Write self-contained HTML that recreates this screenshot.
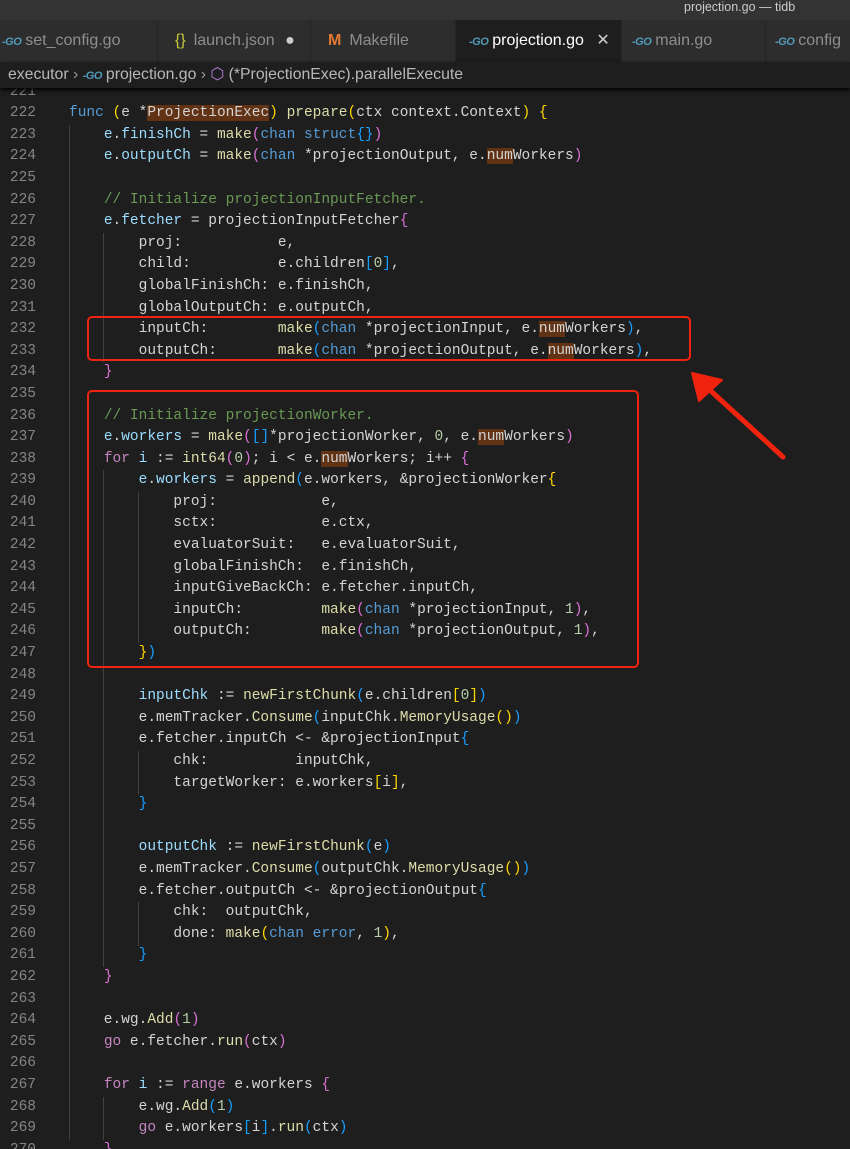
<!DOCTYPE html>
<html><head><meta charset="utf-8"><style>
*{margin:0;padding:0;box-sizing:border-box}
body{width:850px;height:1149px;background:#1e1e1e;overflow:hidden;position:relative;font-family:"Liberation Sans",sans-serif}
#title{position:absolute;left:0;top:0;width:850px;height:20px;background:#333;color:#ccc;font-size:12.5px;line-height:14px}
#title span{position:absolute;left:684px;top:0}
#tabs{position:absolute;left:0;top:20px;width:850px;height:42px;background:#252526}
.tab{position:absolute;top:0;height:42px;background:#2d2d2d;border-right:1px solid #252526;color:#8e8e8e;font-size:16px;line-height:42px;white-space:nowrap;overflow:hidden}
.tab.act{background:#1e1e1e;color:#fff}
.go{color:#519aba;font-weight:bold;font-style:italic;font-size:11px;margin-right:4px;letter-spacing:-.5px}
#bc{position:absolute;left:0;top:62px;width:850px;height:26px;background:#1e1e1e;color:#b8b8b8;font-size:15.8px;line-height:26px;padding-left:8px;white-space:nowrap;box-shadow:0 2px 4px #000;z-index:3}
#ed{position:absolute;left:0;top:88px;width:850px;height:1061px;overflow:hidden}
#in{position:absolute;left:0;top:-6.4px;width:850px}
.l{height:21.6px;line-height:21.6px;font-family:"Liberation Mono",monospace;font-size:14.5px;white-space:pre;color:#d4d4d4;position:relative}
.n{position:absolute;left:0;width:36px;text-align:right;color:#858585}
.c{position:absolute;left:69px}
.k{color:#569cd6}.p{color:#c586c0}.f{color:#dcdcaa}.v{color:#9cdcfe}.m{color:#6a9955}.u{color:#b5cea8}
.y{color:#ffd700}.q{color:#da70d6}.b{color:#179fff}
.h{background:#613214}
.g{position:absolute;width:1px;background:#404040}
.box{position:absolute;border:2.5px solid #f0230f;border-radius:5px;z-index:4}
</style></head><body>
<div id="title"><span>projection.go — tidb</span></div>
<div id="tabs">
<div class="tab" style="left:0;width:158px;padding-left:2px"><span class="go">-GO</span>set_config.go</div>
<div class="tab" style="left:158px;width:153px;padding-left:17px"><span style="color:#cbcb41;margin-right:8px">{}</span>launch.json <span style="color:#ccc;margin-left:6px">●</span></div>
<div class="tab" style="left:311px;width:145px;padding-left:17px"><span style="color:#e37933;font-weight:bold;margin-right:8px">M</span>Makefile</div>
<div class="tab act" style="left:456px;width:166px;padding-left:13px"><span class="go">-GO</span>projection.go <span style="color:#ccc;margin-left:8px">✕</span></div>
<div class="tab" style="left:622px;width:144px;padding-left:10px"><span class="go">-GO</span>main.go</div>
<div class="tab" style="left:766px;width:90px;padding-left:9px"><span class="go">-GO</span>config</div>
</div>
<div id="bc">executor <span style="color:#999">›</span> <span class="go">-GO</span>projection.go <span style="color:#999">›</span> <span style="color:#b180d7">⬡</span> (*ProjectionExec).parallelExecute</div>
<div id="ed"><div id="in">
<div class="g" style="left:69px;top:43.2px;height:1015px"></div>
<div class="g" style="left:103px;top:151.2px;height:129.6px"></div>
<div class="g" style="left:103px;top:388.8px;height:496.8px"></div>
<div class="g" style="left:138px;top:410.4px;height:151.2px"></div>
<div class="g" style="left:138px;top:669.6px;height:43.2px"></div>
<div class="g" style="left:138px;top:820.8px;height:43.2px"></div>
<div class="g" style="left:103px;top:1015.2px;height:43.2px"></div>
<div class="l"><span class="n">221</span></div>
<div class="l"><span class="n">222</span><span class="c"><span class="k">func</span> <span class="y">(</span>e *<span class="h">ProjectionExec</span><span class="y">)</span> <span class="f">prepare</span><span class="y">(</span>ctx context.Context<span class="y">)</span> <span class="y">{</span></span></div>
<div class="l"><span class="n">223</span><span class="c">    <span class="v">e</span>.<span class="v">finishCh</span> = <span class="f">make</span><span class="q">(</span><span class="k">chan struct</span><span class="b">{}</span><span class="q">)</span></span></div>
<div class="l"><span class="n">224</span><span class="c">    <span class="v">e</span>.<span class="v">outputCh</span> = <span class="f">make</span><span class="q">(</span><span class="k">chan</span> *projectionOutput, e.<span class="h">num</span>Workers<span class="q">)</span></span></div>
<div class="l"><span class="n">225</span></div>
<div class="l"><span class="n">226</span><span class="c">    <span class="m">// Initialize projectionInputFetcher.</span></span></div>
<div class="l"><span class="n">227</span><span class="c">    <span class="v">e</span>.<span class="v">fetcher</span> = projectionInputFetcher<span class="q">{</span></span></div>
<div class="l"><span class="n">228</span><span class="c">        proj:           e,</span></div>
<div class="l"><span class="n">229</span><span class="c">        child:          e.children<span class="b">[</span><span class="u">0</span><span class="b">]</span>,</span></div>
<div class="l"><span class="n">230</span><span class="c">        globalFinishCh: e.finishCh,</span></div>
<div class="l"><span class="n">231</span><span class="c">        globalOutputCh: e.outputCh,</span></div>
<div class="l"><span class="n">232</span><span class="c">        inputCh:        <span class="f">make</span><span class="b">(</span><span class="k">chan</span> *projectionInput, e.<span class="h">num</span>Workers<span class="b">)</span>,</span></div>
<div class="l"><span class="n">233</span><span class="c">        outputCh:       <span class="f">make</span><span class="b">(</span><span class="k">chan</span> *projectionOutput, e.<span class="h">num</span>Workers<span class="b">)</span>,</span></div>
<div class="l"><span class="n">234</span><span class="c">    <span class="q">}</span></span></div>
<div class="l"><span class="n">235</span></div>
<div class="l"><span class="n">236</span><span class="c">    <span class="m">// Initialize projectionWorker.</span></span></div>
<div class="l"><span class="n">237</span><span class="c">    <span class="v">e</span>.<span class="v">workers</span> = <span class="f">make</span><span class="q">(</span><span class="b">[]</span>*projectionWorker, <span class="u">0</span>, e.<span class="h">num</span>Workers<span class="q">)</span></span></div>
<div class="l"><span class="n">238</span><span class="c">    <span class="p">for</span> <span class="v">i</span> := <span class="f">int64</span><span class="q">(</span><span class="u">0</span><span class="q">)</span>; i &lt; e.<span class="h">num</span>Workers; i++ <span class="q">{</span></span></div>
<div class="l"><span class="n">239</span><span class="c">        <span class="v">e</span>.<span class="v">workers</span> = <span class="f">append</span><span class="b">(</span>e.workers, &amp;projectionWorker<span class="y">{</span></span></div>
<div class="l"><span class="n">240</span><span class="c">            proj:            e,</span></div>
<div class="l"><span class="n">241</span><span class="c">            sctx:            e.ctx,</span></div>
<div class="l"><span class="n">242</span><span class="c">            evaluatorSuit:   e.evaluatorSuit,</span></div>
<div class="l"><span class="n">243</span><span class="c">            globalFinishCh:  e.finishCh,</span></div>
<div class="l"><span class="n">244</span><span class="c">            inputGiveBackCh: e.fetcher.inputCh,</span></div>
<div class="l"><span class="n">245</span><span class="c">            inputCh:         <span class="f">make</span><span class="q">(</span><span class="k">chan</span> *projectionInput, <span class="u">1</span><span class="q">)</span>,</span></div>
<div class="l"><span class="n">246</span><span class="c">            outputCh:        <span class="f">make</span><span class="q">(</span><span class="k">chan</span> *projectionOutput, <span class="u">1</span><span class="q">)</span>,</span></div>
<div class="l"><span class="n">247</span><span class="c">        <span class="y">}</span><span class="b">)</span></span></div>
<div class="l"><span class="n">248</span></div>
<div class="l"><span class="n">249</span><span class="c">        <span class="v">inputChk</span> := <span class="f">newFirstChunk</span><span class="b">(</span>e.children<span class="y">[</span><span class="u">0</span><span class="y">]</span><span class="b">)</span></span></div>
<div class="l"><span class="n">250</span><span class="c">        e.memTracker.<span class="f">Consume</span><span class="b">(</span>inputChk.<span class="f">MemoryUsage</span><span class="y">()</span><span class="b">)</span></span></div>
<div class="l"><span class="n">251</span><span class="c">        e.fetcher.inputCh &lt;- &amp;projectionInput<span class="b">{</span></span></div>
<div class="l"><span class="n">252</span><span class="c">            chk:          inputChk,</span></div>
<div class="l"><span class="n">253</span><span class="c">            targetWorker: e.workers<span class="y">[</span>i<span class="y">]</span>,</span></div>
<div class="l"><span class="n">254</span><span class="c">        <span class="b">}</span></span></div>
<div class="l"><span class="n">255</span></div>
<div class="l"><span class="n">256</span><span class="c">        <span class="v">outputChk</span> := <span class="f">newFirstChunk</span><span class="b">(</span>e<span class="b">)</span></span></div>
<div class="l"><span class="n">257</span><span class="c">        e.memTracker.<span class="f">Consume</span><span class="b">(</span>outputChk.<span class="f">MemoryUsage</span><span class="y">()</span><span class="b">)</span></span></div>
<div class="l"><span class="n">258</span><span class="c">        e.fetcher.outputCh &lt;- &amp;projectionOutput<span class="b">{</span></span></div>
<div class="l"><span class="n">259</span><span class="c">            chk:  outputChk,</span></div>
<div class="l"><span class="n">260</span><span class="c">            done: <span class="f">make</span><span class="y">(</span><span class="k">chan</span> <span class="k">error</span>, <span class="u">1</span><span class="y">)</span>,</span></div>
<div class="l"><span class="n">261</span><span class="c">        <span class="b">}</span></span></div>
<div class="l"><span class="n">262</span><span class="c">    <span class="q">}</span></span></div>
<div class="l"><span class="n">263</span></div>
<div class="l"><span class="n">264</span><span class="c">    e.wg.<span class="f">Add</span><span class="q">(</span><span class="u">1</span><span class="q">)</span></span></div>
<div class="l"><span class="n">265</span><span class="c">    <span class="p">go</span> e.fetcher.<span class="f">run</span><span class="q">(</span>ctx<span class="q">)</span></span></div>
<div class="l"><span class="n">266</span></div>
<div class="l"><span class="n">267</span><span class="c">    <span class="p">for</span> <span class="v">i</span> := <span class="p">range</span> e.workers <span class="q">{</span></span></div>
<div class="l"><span class="n">268</span><span class="c">        e.wg.<span class="f">Add</span><span class="b">(</span><span class="u">1</span><span class="b">)</span></span></div>
<div class="l"><span class="n">269</span><span class="c">        <span class="p">go</span> e.workers<span class="b">[</span>i<span class="b">]</span>.<span class="f">run</span><span class="b">(</span>ctx<span class="b">)</span></span></div>
<div class="l"><span class="n">270</span><span class="c">    <span class="q">}</span></span></div>
</div></div>
<div class="box" style="left:87px;top:316px;width:604px;height:45px"></div>
<div class="box" style="left:87px;top:390px;width:552px;height:278px"></div>
<svg style="position:absolute;left:0;top:0;z-index:5" width="850" height="1149">
<line x1="783" y1="457" x2="712" y2="392" stroke="#f0230f" stroke-width="5" stroke-linecap="round"/>
<polygon points="692,373 722,380 699,401" fill="#f0230f" stroke="#f0230f" stroke-width="2" stroke-linejoin="round"/>
</svg>
</body></html>
